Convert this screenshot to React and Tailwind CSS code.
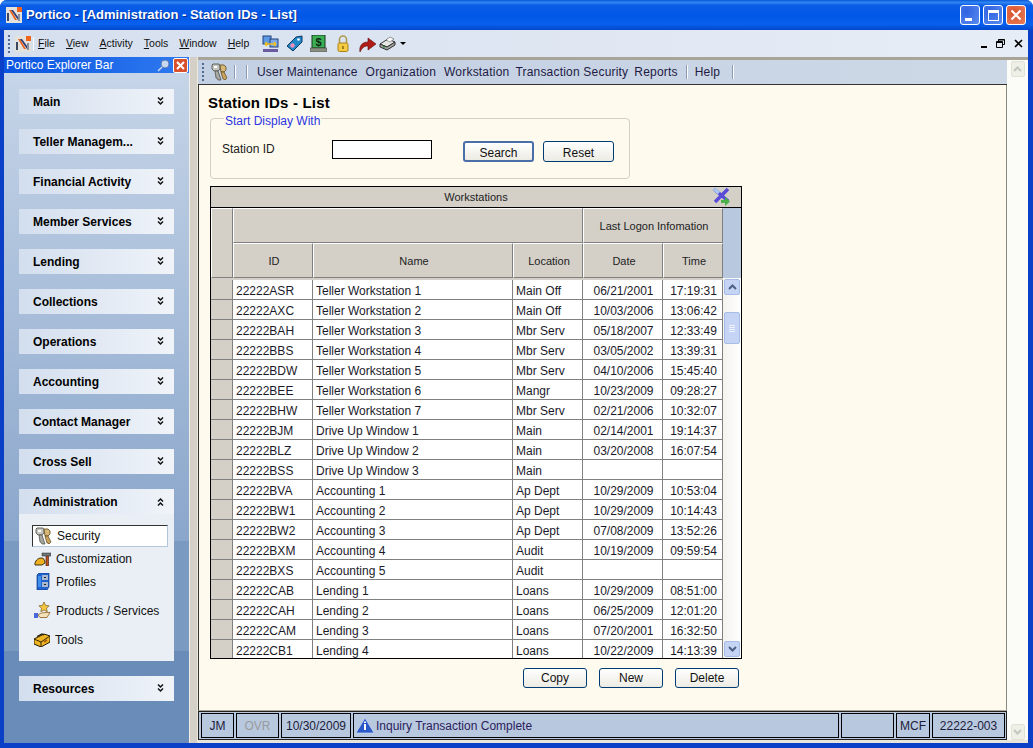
import React from "react";

const rows = [
  ["22222ASR", "Teller Workstation 1", "Main Off", "06/21/2001", "17:19:31"],
  ["22222AXC", "Teller Workstation 2", "Main Off", "10/03/2006", "13:06:42"],
  ["22222BAH", "Teller Workstation 3", "Mbr Serv", "05/18/2007", "12:33:49"],
  ["22222BBS", "Teller Workstation 4", "Mbr Serv", "03/05/2002", "13:39:31"],
  ["22222BDW", "Teller Workstation 5", "Mbr Serv", "04/10/2006", "15:45:40"],
  ["22222BEE", "Teller Workstation 6", "Mangr", "10/23/2009", "09:28:27"],
  ["22222BHW", "Teller Workstation 7", "Mbr Serv", "02/21/2006", "10:32:07"],
  ["22222BJM", "Drive Up Window 1", "Main", "02/14/2001", "19:14:37"],
  ["22222BLZ", "Drive Up Window 2", "Main", "03/20/2008", "16:07:54"],
  ["22222BSS", "Drive Up Window 3", "Main", "", ""],
  ["22222BVA", "Accounting 1", "Ap Dept", "10/29/2009", "10:53:04"],
  ["22222BW1", "Accounting 2", "Ap Dept", "10/29/2009", "10:14:43"],
  ["22222BW2", "Accounting 3", "Ap Dept", "07/08/2009", "13:52:26"],
  ["22222BXM", "Accounting 4", "Audit", "10/19/2009", "09:59:54"],
  ["22222BXS", "Accounting 5", "Audit", "", ""],
  ["22222CAB", "Lending 1", "Loans", "10/29/2009", "08:51:00"],
  ["22222CAH", "Lending 2", "Loans", "06/25/2009", "12:01:20"],
  ["22222CAM", "Lending 3", "Loans", "07/20/2001", "16:32:50"],
  ["22222CB1", "Lending 4", "Loans", "10/22/2009", "14:13:39"],
];

const sections = [
  "Main",
  "Teller Managem...",
  "Financial Activity",
  "Member Services",
  "Lending",
  "Collections",
  "Operations",
  "Accounting",
  "Contact Manager",
  "Cross Sell",
];

function Logo() {
  return (
    <svg width="16" height="16" viewBox="0 0 16 16" className="shrink-0">
      <rect width="16" height="16" fill="#e4e2dc" />
      <rect x="11" y="0" width="5" height="5" fill="#f0641e" />
      <path d="M3 3h2l6 10H9z" fill="#e8601c" />
      <path d="M1 6h2v8H1z" fill="#3d4660" />
      <path d="M5 3h2l5 7v3z" fill="#2c3870" />
      <path d="M12 7h2v7h-2z" fill="#8a8f9a" />
    </svg>
  );
}

function Keys() {
  return (
    <svg width="17" height="18" viewBox="0 0 17 18" className="shrink-0">
      <path d="M2 1h6l1 2v3L7 8H3L1 6V2z" fill="#c4c4c0" stroke="#55554f" strokeWidth=".9" />
      <rect x="3" y="3" width="3" height="2" fill="#fff" />
      <path d="M9 2h4l2 2v3l-2 2h-3z" fill="#d8b878" stroke="#6a5226" strokeWidth=".9" />
      <path d="M4 8h3l3 9H7L6 15H5z" fill="#a8a8a2" stroke="#55554f" strokeWidth=".8" />
      <path d="M10 9h3l3 6-2 2-1-1-1 0z" fill="#cba45c" stroke="#6a5226" strokeWidth=".8" />
    </svg>
  );
}

function Hat() {
  return (
    <svg width="17" height="14" viewBox="0 0 17 14" className="shrink-0">
      <path d="M1 13c-.5-4 3-7 6-7s4 2 4 5l-3 2z" fill="#efb020" stroke="#2a2006" strokeWidth=".9" />
      <rect x="12" y="3" width="2.500" height="11" fill="#c0501c" stroke="#3a1808" strokeWidth=".6" />
      <path d="M8 1h9v3H8z" fill="#70757a" stroke="#222" strokeWidth=".5" />
    </svg>
  );
}

function Cabinet() {
  return (
    <svg width="14" height="17" viewBox="0 0 14 17" className="shrink-0">
      <path d="M1 2l2-2h10v14l-2 3H1z" fill="#1f62d0" stroke="#123a80" strokeWidth=".7" />
      <rect x="6" y="2" width="6" height="5" fill="#a8b8d0" />
      <rect x="6" y="9" width="6" height="5" fill="#a8b8d0" />
      <rect x="2" y="3" width="3" height="11" fill="#3f90ec" />
      <rect x="8" y="4" width="2" height="1" fill="#223" />
      <rect x="8" y="11" width="2" height="1" fill="#223" />
    </svg>
  );
}

function Star() {
  return (
    <svg width="17" height="17" viewBox="0 0 17 17" className="shrink-0">
      <path d="M10 0l1.600 3.400 3.600.4-2.700 2.400.8 3.500L10 8 6.800 9.700l.8-3.500L4.900 3.800l3.600-.4z" fill="#f6c640" stroke="#7a5e18" strokeWidth=".7" />
      <path d="M4 13c3-2.500 6-2.500 12-2.500l-3 5H6z" fill="#f4e2b8" stroke="#8a5a20" strokeWidth=".8" />
      <rect x="0" y="11" width="4" height="5" fill="#4a68d8" />
    </svg>
  );
}

function Toolbox() {
  return (
    <svg width="16" height="14" viewBox="0 0 16 14" className="shrink-0">
      <path d="M0 6l10-5 6 2v6l-9 5-7-3z" fill="#eeb422" stroke="#241a04" strokeWidth="1" />
      <path d="M0 6l7 3 9-6M7 9v5" fill="none" stroke="#241a04" strokeWidth=".9" />
      <path d="M3 3.500l5-2.500 2 1" fill="none" stroke="#241a04" strokeWidth="1.200" />
      <path d="M10 9l3-2" stroke="#a8620c" strokeWidth="2" />
    </svg>
  );
}

function Chevrons({ up }) {
  return (
    <svg width="7" height="9" viewBox="0 0 7 9" className={up ? "rotate-180" : ""}>
      <path d="M1 .5L3.500 3 6 .5M1 4.500L3.500 7 6 4.500" fill="none" stroke="#111" strokeWidth="1.500" />
    </svg>
  );
}

function SectionHeader({ label, up }) {
  return (
    <div className="h-[25px] flex items-center justify-between pl-[14px] pr-[10px] bg-gradient-to-r from-[#d3deee] to-[#f0f4f9]">
      <span className="font-bold text-[12px] text-black">{label}</span>
      <Chevrons up={up} />
    </div>
  );
}

function Grip() {
  return (
    <div className="flex flex-col gap-[2px] w-[2px] shrink-0">
      {[0, 1, 2, 3, 4].map((i) => (
        <span key={i} className="w-[2px] h-[2px] bg-[#4f6a94]" />
      ))}
    </div>
  );
}

function XpBtn({ children, className = "" }) {
  return (
    <div className={`w-[20px] h-[20px] rounded-[3px] border border-white flex items-center justify-center ${className}`}>
      {children}
    </div>
  );
}

function Btn({ label, className = "" }) {
  return (
    <div className={`h-[20px] rounded-[3px] border border-[#003c74] bg-gradient-to-b from-white to-[#ecebe3] flex items-center justify-center text-[12px] text-[#111] ${className}`}>
      {label}
    </div>
  );
}

function ScrollBtn({ up, disabled }) {
  return (
    <div className={`h-[16px] rounded-[2px] border flex items-center justify-center ${disabled ? "w-[14px] border-[#dfe3d4] bg-[#eef0e8]" : "w-[16px] border-[#a6bde8] bg-[#c5d4f5]"}`}>
      <svg width="9" height="6" viewBox="0 0 9 6" className={up ? "" : "rotate-180"}>
        <path d="M1 5l3.500-3.500L8 5" fill="none" stroke={disabled ? "#c2c8b8" : "#4d6185"} strokeWidth="2" />
      </svg>
    </div>
  );
}

function HeadCell({ children, className = "" }) {
  return (
    <div className={`border-t border-l border-t-white border-l-white border-r border-b border-r-[#808080] border-b-[#808080] bg-[#d4d0c8] flex items-center justify-center pl-[2px] pt-[2px] text-[11px] text-[#222] ${className}`}>
      {children}
    </div>
  );
}

function StatusCell({ children, className = "" }) {
  return (
    <div className={`h-[25px] border border-black flex items-center justify-center text-[12px] text-[#1c1c3a] shrink-0 ${className}`}>
      {children}
    </div>
  );
}

export default function App() {
  return (
    <div className="w-[1033px] h-[748px] flex flex-col overflow-hidden rounded-t-[7px] bg-[#0a3fc8] font-['Liberation_Sans',Arial,sans-serif]">
      {/* Title bar */}
      <div className="h-[30px] shrink-0 pl-[6px] pr-[7px] flex items-center bg-[linear-gradient(180deg,#0a58d8_0%,#2f86f2_8%,#0a5ce6_18%,#0058e8_55%,#0a60ee_80%,#0048cc_100%)]">
        <Logo />
        <span className="ml-[4px] font-bold text-[13px] text-white [text-shadow:1px_1px_0_#0a2f90]">
          Portico - [Administration - Station IDs - List]
        </span>
        <div className="ml-auto flex gap-[3px]">
          <XpBtn className="bg-[radial-gradient(circle_at_30%_30%,#2f62e0,#5a8cf0)]">
            <span className="w-[7px] h-[3px] bg-white mt-[9px] -ml-[4px]" />
          </XpBtn>
          <XpBtn className="bg-[radial-gradient(circle_at_30%_30%,#2f62e0,#5a8cf0)]">
            <span className="w-[11px] h-[11px] border border-white border-t-[3px]" />
          </XpBtn>
          <XpBtn className="bg-[radial-gradient(circle_at_40%_40%,#d8502c,#e8805a)]">
            <svg width="12" height="12" viewBox="0 0 12 12">
              <path d="M1.500 1.500l9 9M10.500 1.500l-9 9" stroke="#fff" strokeWidth="2.200" />
            </svg>
          </XpBtn>
        </div>
      </div>

      <div className="flex-1 min-h-0 flex flex-col ml-[4px] mr-[5px] mb-[5px]">
        {/* Menu bar */}
        <div className="h-[27px] shrink-0 flex items-center bg-gradient-to-r from-[#d5dfee] to-[#e7edf6] text-[10.5px] text-[#111]">
          <div className="ml-[4px]"><Grip /></div>
          <div className="ml-[5px] bg-[#f2f2ee]"><Logo /></div>
          <span className="ml-[2px] w-[1px] h-[14px] bg-[#8a9bb8] border-r border-white" />
          <div className="ml-[4px] flex gap-[11px]">
            <span><u>F</u>ile</span>
            <span><u>V</u>iew</span>
            <span><u>A</u>ctivity</span>
            <span><u>T</u>ools</span>
            <span><u>W</u>indow</span>
            <span><u>H</u>elp</span>
          </div>
          <div className="ml-[13px] flex items-center gap-[7px]">
            <svg width="17" height="17" viewBox="0 0 17 17">
              <rect x="1" y="1" width="8" height="8" fill="#5c9ae8" stroke="#22407a" />
              <rect x="8" y="4" width="8" height="8" fill="#7aa8ec" stroke="#22407a" />
              <path d="M3 9h11M3 9l2-2M3 9l2 2M14 9l-2-2M14 9l-2 2" stroke="#f0c020" strokeWidth="1.600" fill="none" />
              <rect x="1" y="14" width="15" height="3" fill="#6a5aa0" />
            </svg>
            <svg width="17" height="17" viewBox="0 0 17 17">
              <path d="M1 11L10 2l6-1v6L7 16z" fill="#1f86c8" stroke="#0f3a60" />
              <circle cx="6.500" cy="10.500" r="2.200" fill="#f090b8" />
              <circle cx="12.500" cy="4.500" r="1.300" fill="#fff" />
            </svg>
            <svg width="17" height="17" viewBox="0 0 17 17">
              <rect x="2" y="0" width="13" height="13" fill="#3cae54" stroke="#123a18" />
              <text x="8.500" y="11" fontSize="11" fontWeight="700" textAnchor="middle" fill="#0c2a12">$</text>
              <rect x="0" y="13" width="17" height="4" fill="#8a8f80" stroke="#444" strokeWidth=".6" />
            </svg>
            <svg width="12" height="17" viewBox="0 0 12 17" className="ml-[3px]">
              <path d="M2.500 8V4.500a3.500 3.500 0 017 0V8" fill="none" stroke="#b09a50" strokeWidth="1.600" />
              <rect x="1" y="8" width="10" height="8.500" rx="1.500" fill="#f4cc44" stroke="#a88018" />
              <rect x="5" y="11" width="2" height="3" fill="#a88018" />
            </svg>
            <svg width="17" height="16" viewBox="0 0 17 16" className="ml-[3px]">
              <path d="M1 16c-1-6 2-10 8-10V2l8 6-8 6v-4c-4 0-6 2-8 6z" fill="#b01c18" stroke="#5a0c08" strokeWidth=".6" />
            </svg>
            <svg width="17" height="15" viewBox="0 0 17 15" className="-ml-[4px]">
              <path d="M1 8l8-5 7 3-8 5z" fill="#e8e8e4" stroke="#333" />
              <path d="M1 8v3l7 3 8-5V6l-8 5z" fill="#a0a29c" stroke="#333" />
              <path d="M7 4l4-3 4 2-4 3z" fill="#fff" stroke="#555" strokeWidth=".6" />
              <rect x="4" y="10" width="2" height="1.500" fill="#2a8a3a" />
            </svg>
            <span className="-ml-[3px] w-0 h-0 border-l-[3px] border-r-[3px] border-t-[3px] border-l-transparent border-r-transparent border-t-black" />
          </div>
          <div className="ml-auto mr-[5px] flex items-center gap-[9px]">
            <span className="w-[6px] h-[2px] bg-black mt-[6px]" />
            <svg width="9" height="9" viewBox="0 0 9 9">
              <path d="M2.500 2.500V.5h6v5h-2M.5 2.500h6v6h-6z" fill="none" stroke="#000" />
              <path d="M2.500 1h6M.5 3.500h6" stroke="#000" />
            </svg>
            <svg width="9" height="9" viewBox="0 0 9 9">
              <path d="M1 1l7 7M8 1L1 8" stroke="#000" strokeWidth="1.600" />
            </svg>
          </div>
        </div>

        {/* Body */}
        <div className="flex-1 min-h-0 flex">
          {/* Explorer bar */}
          <div className="w-[185px] shrink-0 flex flex-col">
            <div className="h-[16px] shrink-0 flex items-center pl-[2px] pr-[1px] bg-gradient-to-r from-[#0a54e0] to-[#2f7af0] text-[12px] text-white">
              <span>Portico Explorer Bar</span>
              <svg width="13" height="13" viewBox="0 0 13 13" className="ml-auto">
                <circle cx="8" cy="5" r="4" fill="#c8d8f0" stroke="#5a7ab0" />
                <path d="M5 8L1 12" stroke="#c8d8f0" strokeWidth="1.500" />
              </svg>
              <div className="ml-[3px] w-[15px] h-[15px] rounded-[2px] border border-white bg-[#d8502c] flex items-center justify-center">
                <svg width="9" height="9" viewBox="0 0 9 9">
                  <path d="M1 1l7 7M8 1L1 8" stroke="#fff" strokeWidth="2" />
                </svg>
              </div>
            </div>
            <div className="flex-1 min-h-0 pl-[15px] pr-[15px] pt-[16px] flex flex-col gap-[15px] bg-[linear-gradient(180deg,#c6d5e8_0px,#8aa6cb_468px,#7b9ac2_468px,#7b9ac2_578px,#6a8cb8_578px,#6a8cb8_100%)]">
              {sections.map((s) => (
                <SectionHeader key={s} label={s} />
              ))}
              <div>
                <SectionHeader label="Administration" up />
                <div className="h-[147px] bg-[#e9eff5] pt-[11px] pl-[13px] pr-[6px] text-[12px] text-[#111]">
                  <div className="h-[22px] flex items-center gap-[5px] pl-[2px] bg-white border border-t-[#333] border-l-[#333] border-r-[#b4c6dc] border-b-[#b4c6dc]">
                    <Keys />
                    <span>Security</span>
                  </div>
                  <div className="h-[24px] flex items-center gap-[5px] pl-[2px]">
                    <Hat />
                    <span>Customization</span>
                  </div>
                  <div className="h-[21px] flex items-center gap-[6px] pl-[4px]">
                    <Cabinet />
                    <span>Profiles</span>
                  </div>
                  <div className="h-[37px] flex items-center gap-[5px] pl-[2px]">
                    <Star />
                    <span>Products / Services</span>
                  </div>
                  <div className="h-[22px] flex items-center gap-[5px] pl-[2px]">
                    <Toolbox />
                    <span>Tools</span>
                  </div>
                </div>
              </div>
              <SectionHeader label="Resources" />
            </div>
          </div>

          {/* Splitter */}
          <div className="w-[9px] shrink-0 bg-[#d4d0c8] border-r border-r-[#ece9d8] border-l border-l-[#f0eee6]" />

          {/* Main */}
          <div className="flex-1 min-w-0 flex flex-col bg-[#e8e6da] pb-[3px]">
            <div className="h-[3px] shrink-0 bg-[#a8a498]" />
            <div className="flex-1 min-h-0 flex">
              <div className="flex-1 min-w-0 flex flex-col">
                {/* Sub toolbar */}
                <div className="h-[25px] shrink-0 flex items-center pl-[4px] bg-gradient-to-r from-[#c3d0e3] to-[#cdd8e6] border-b border-b-[#333] text-[12px] tracking-[0.2px] text-[#221a44]">
                  <Grip />
                  <div className="ml-[7px]"><Keys /></div>
                  <span className="ml-[6px] w-[2px] h-[14px] bg-white border-l border-l-[#8a9bb8]" />
                  <span className="ml-[10px] w-[2px] h-[14px] bg-white border-l border-l-[#8a9bb8]" />
                  <div className="ml-[9px] flex gap-[8px]">
                    <span>User Maintenance</span>
                    <span>Organization</span>
                    <span>Workstation</span>
                    <span className="-ml-[2px]">Transaction Security</span>
                    <span className="-ml-[2px]">Reports</span>
                  </div>
                  <span className="ml-[8px] w-[2px] h-[14px] bg-white border-l border-l-[#8a9bb8]" />
                  <span className="ml-[7px]">Help</span>
                  <span className="ml-[12px] w-[2px] h-[14px] bg-white border-l border-l-[#8a9bb8]" />
                </div>

                {/* Page */}
                <div className="flex-1 min-h-0 bg-[#fffaee] border-l border-r border-b border-l-[#333] border-r-[#8a8a80] border-b-[#a8a498] pl-[9px] pt-[10px] flex flex-col">
                  <div className="h-[15px] leading-[15px] font-bold text-[15px] tracking-[0.2px] text-black">Station IDs - List</div>
                  <div className="relative mt-[8px] ml-[2px] w-[420px] h-[61px] rounded-[4px] border border-[#d4d0c0] flex items-start">
                    <span className="absolute left-[13px] -top-[5px] px-[1px] bg-[#fffaee] text-[12px] leading-[14px] text-[#2a35e0]">Start Display With</span>
                    <span className="mt-[21px] ml-[11px] w-[110px] text-[12px] text-[#222]">Station ID</span>
                    <div className="mt-[21px] w-[100px] h-[19px] bg-white border border-black" />
                    <Btn label="Search" className="mt-[22px] ml-[31px] w-[71px] !h-[21px] pt-[2px] border-2 border-[#4a6ea8]" />
                    <Btn label="Reset" className="mt-[22px] ml-[9px] w-[71px] !h-[21px] pt-[2px]" />
                  </div>

                  {/* Table */}
                  <div className="mt-[7px] ml-[2px] w-[532px] h-[473px] border border-black flex flex-col overflow-hidden bg-white shrink-0">
                    <div className="relative h-[21px] shrink-0 bg-[#d4d0c8] border-b border-b-black flex items-center justify-center text-[11px] text-[#222]">
                      Workstations
                      <svg width="19" height="19" viewBox="0 0 19 19" className="absolute right-[10px] top-[0px]">
                        <path d="M2 2l14 12M16 2L3 15" stroke="#5a4ad8" strokeWidth="3.500" />
                        <path d="M2 2l5 4" stroke="#a8c8f0" strokeWidth="3.500" />
                        <path d="M9 13h4v-3l5 4.500-5 4.500v-3H9z" fill="#4ab04a" />
                      </svg>
                    </div>
                    <div className="flex-1 min-h-0 flex">
                      <div className="w-[512px] shrink-0 flex flex-col">
                        <div className="h-[70px] shrink-0 grid grid-cols-[22px_80px_200px_70px_80px_60px] grid-rows-[35px_35px]">
                          <HeadCell className="row-span-2" />
                          <HeadCell className="col-span-3" />
                          <HeadCell className="col-span-2">Last Logon Infomation</HeadCell>
                          <HeadCell>ID</HeadCell>
                          <HeadCell>Name</HeadCell>
                          <HeadCell>Location</HeadCell>
                          <HeadCell>Date</HeadCell>
                          <HeadCell>Time</HeadCell>
                        </div>
                        <div className="flex-1 min-h-0 overflow-hidden pt-[2px] bg-[#d4d0c8]">
                          {rows.map((r) => (
                            <div key={r[0]} className="h-[20px] grid grid-cols-[22px_80px_200px_70px_80px_60px] grid-rows-[20px] text-[12px] text-[#1a1a2a]">
                              <div className="bg-[#d4d0c8] border-r border-b border-[#808080]" />
                              <div className="bg-white border-r border-b border-[#808080] pl-[3px] leading-[23px]">{r[0]}</div>
                              <div className="bg-white border-r border-b border-[#808080] pl-[3px] leading-[23px]">{r[1]}</div>
                              <div className="bg-white border-r border-b border-[#808080] pl-[3px] leading-[23px]">{r[2]}</div>
                              <div className="bg-white border-r border-b border-[#808080] pl-[2px] text-center leading-[23px]">{r[3]}</div>
                              <div className="bg-white border-r border-b border-[#808080] pl-[2px] text-center leading-[23px]">{r[4]}</div>
                            </div>
                          ))}
                        </div>
                      </div>
                      <div className="w-[18px] shrink-0 flex flex-col">
                        <div className="h-[70px] shrink-0 bg-[#b8c9df]" />
                        <div className="flex-1 min-h-0 flex flex-col items-center bg-gradient-to-r from-[#f4f3ee] to-white pt-[1px] pb-[1px]">
                          <ScrollBtn up />
                          <div className="mt-[17px] w-[16px] h-[32px] rounded-[2px] border border-[#a6bde8] bg-[#c5d4f5] flex flex-col items-center justify-center gap-[1px]">
                            <span className="w-[6px] h-[1px] bg-[#eef3ff]" />
                            <span className="w-[6px] h-[1px] bg-[#eef3ff]" />
                            <span className="w-[6px] h-[1px] bg-[#eef3ff]" />
                            <span className="w-[6px] h-[1px] bg-[#eef3ff]" />
                          </div>
                          <div className="mt-auto"><ScrollBtn /></div>
                        </div>
                      </div>
                    </div>
                  </div>

                  <div className="mt-[9px] ml-[315px] flex gap-[12px]">
                    <Btn label="Copy" className="w-[64px]" />
                    <Btn label="New" className="w-[64px]" />
                    <Btn label="Delete" className="w-[64px]" />
                  </div>
                </div>

                {/* Status bar */}
                <div className="h-[29px] shrink-0 flex items-center gap-[2px] pl-[2px] bg-[#b8c9df] border border-[#222]">
                  <StatusCell className="w-[33px]">JM</StatusCell>
                  <StatusCell className="w-[43px] !text-[#9a9a9a]">OVR</StatusCell>
                  <StatusCell className="w-[70px]">10/30/2009</StatusCell>
                  <StatusCell className="w-[486px] !justify-start pl-[2px] gap-[2px]">
                    <svg width="18" height="16" viewBox="0 0 18 16">
                      <path d="M9 0l9 15H0z" fill="#2a58c8" stroke="#c8d8f0" strokeWidth=".7" />
                      <rect x="8" y="6" width="2" height="6" fill="#fff" />
                      <rect x="8" y="3.500" width="2" height="1.500" fill="#fff" />
                    </svg>
                    <span className="text-[#2c1c5c]">Inquiry Transaction Complete</span>
                  </StatusCell>
                  <StatusCell className="w-[53px]" />
                  <StatusCell className="w-[34px]">MCF</StatusCell>
                  <StatusCell className="w-[73px]">22222-003</StatusCell>
                </div>
              </div>

              {/* Page scrollbar */}
              <div className="w-[21px] shrink-0 bg-[#fbfbf8] flex flex-col items-center pt-[1px]">
                <ScrollBtn up disabled />
                <div className="mt-auto"><ScrollBtn disabled /></div>
              </div>
            </div>
          </div>
        </div>
      </div>
    </div>
  );
}
